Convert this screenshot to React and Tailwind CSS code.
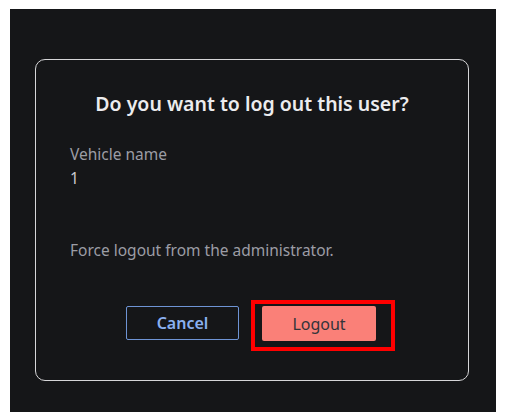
export default function App() {
  return (
    <div className="w-[507px] h-[419px] bg-white pt-[9px] pl-[10px] font-['Noto_Sans',sans-serif]">
      <div className="w-[486px] h-[403px] bg-[#151618] pt-[50px] pl-[25px]">
        {/* dialog */}
        <div className="w-[434px] h-[322px] rounded-[10px] border-[1.5px] border-[#d6d6d8] pl-[34px] pt-[30px]">
          <h2 className="-ml-[34px] text-center text-[19.5px] font-semibold leading-[28px] text-[#ececee]">
            Do you want to log out this user?
          </h2>
          <div className="mt-[24px] text-[15.5px] leading-[24px]">
            <p className="text-[#9c9da5]">Vehicle name</p>
            <p className="text-[#c9cacf]">1</p>
          </div>
          <p className="mt-[48px] text-[15.5px] leading-[24px] text-[#9c9da5]">
            Force logout from the administrator.
          </p>
          <div className="mt-[38px] flex items-start">
            <button className="ml-[56px] mt-[6px] w-[113px] h-[34px] rounded-[2px] border border-[#6e94d4] text-[16px] font-semibold text-[#8ab0f0]">
              Cancel
            </button>
            <div className="ml-[12px] border-4 border-[#ff0000] pl-[7px] pr-[15px] pt-[2px] pb-[6px]">
              <button className="block w-[114px] h-[35px] rounded-[2px] bg-[#fa8078] text-[16px] text-[#33343a]">
                Logout
              </button>
            </div>
          </div>
        </div>
      </div>
    </div>
  );
}
